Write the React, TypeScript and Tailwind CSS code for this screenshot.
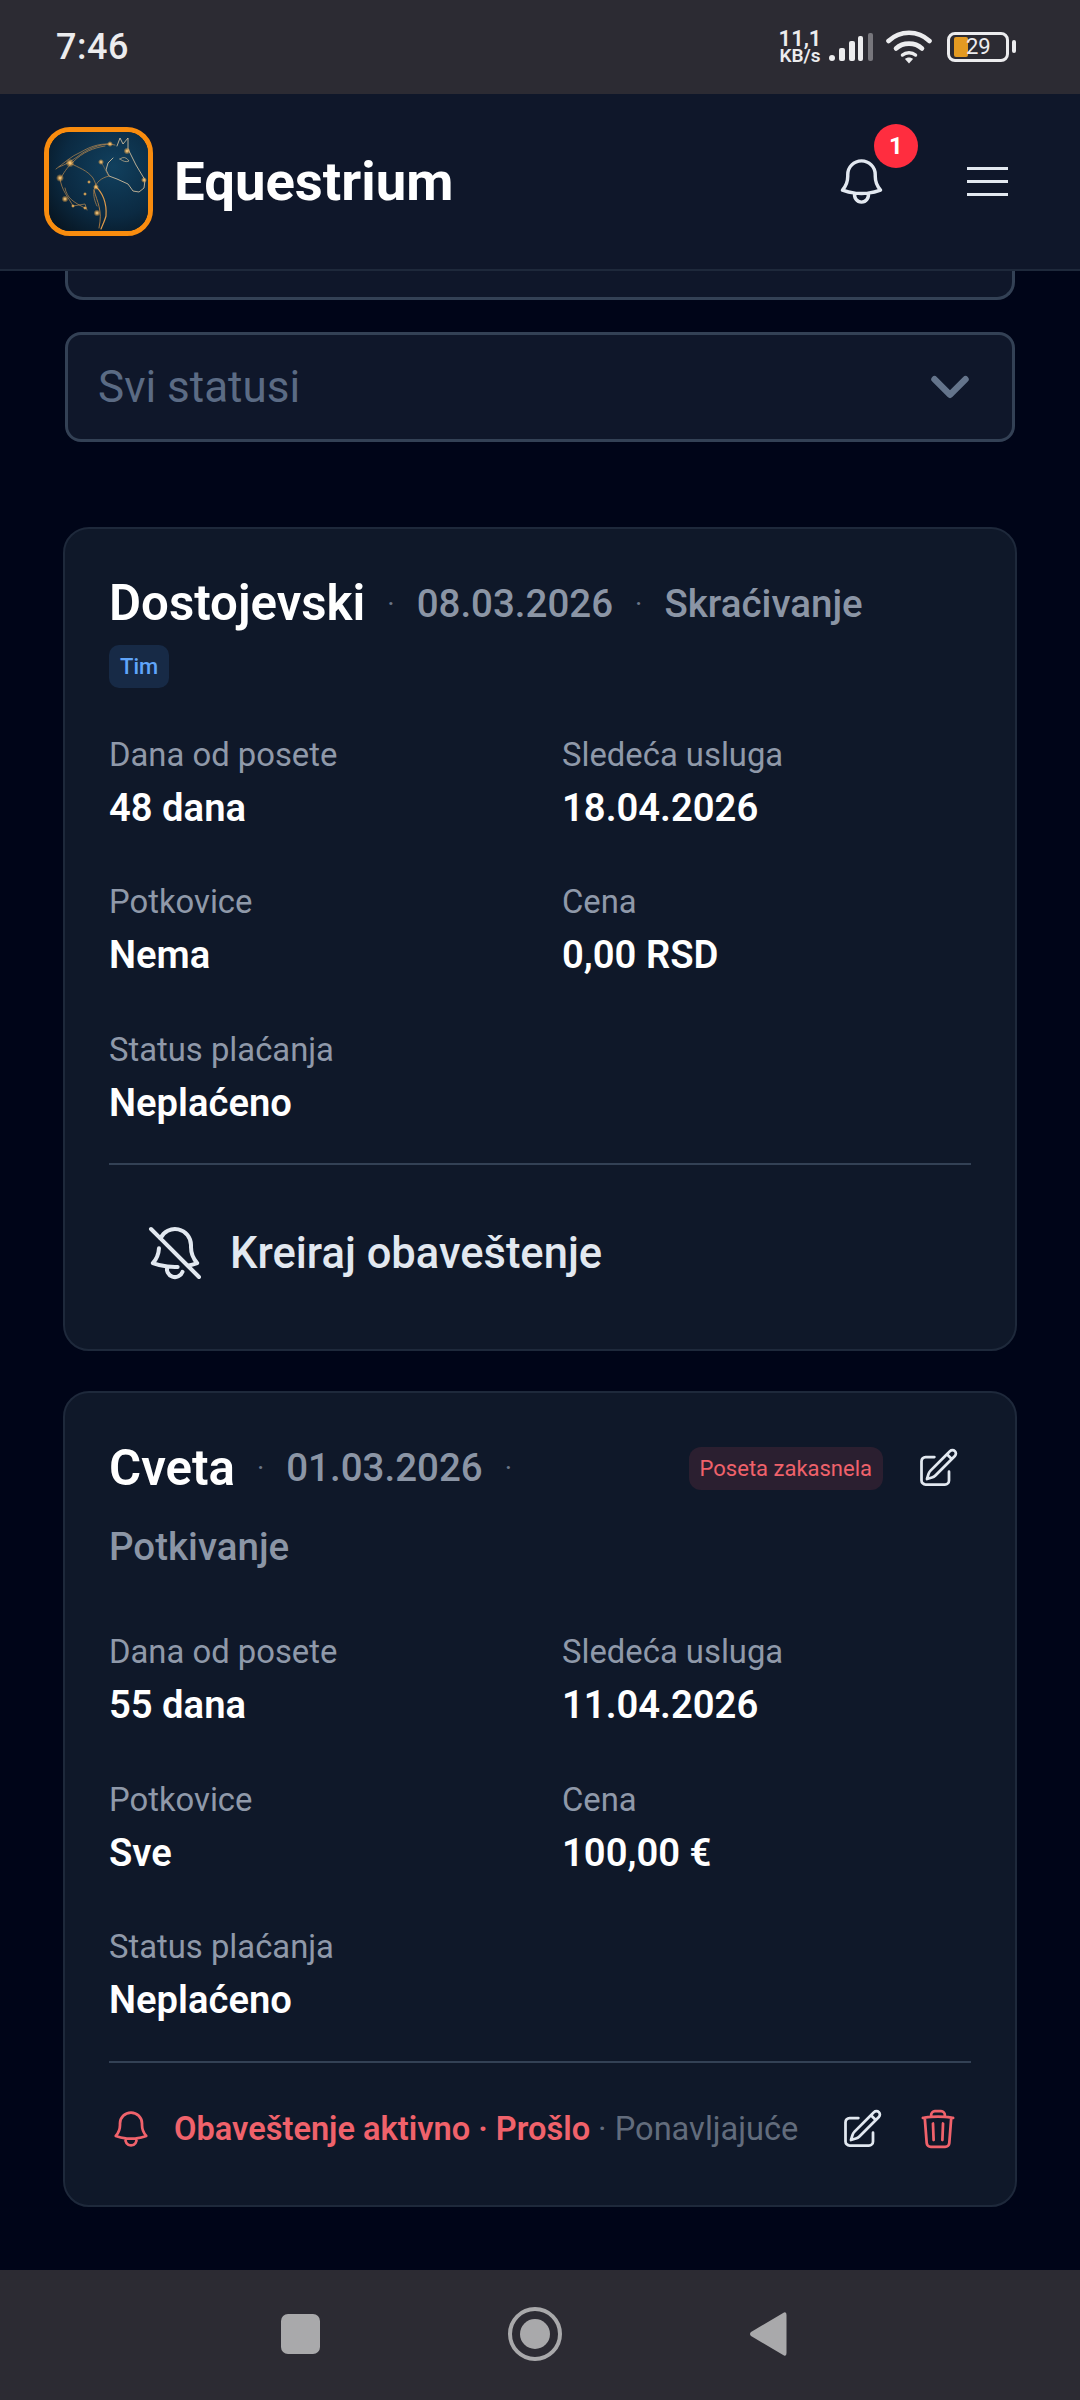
import { HiOutlineBell, HiOutlineBellSlash, HiOutlinePencilSquare, HiOutlineTrash } from "react-icons/hi2";
import { ChevronDown } from "lucide-react";

const sparks: [number, number, number][] = [
  [21, 31, 4.5], [11, 46, 4], [16, 67, 3.5], [48, 81, 3.5], [47, 55, 3], [52, 30, 3],
  [61, 12, 3], [78, 19, 3.5], [95, 48, 3], [24, 74, 2], [36, 62, 2], [40, 50, 2], [36, 76, 2],
];

function Logo() {
  return (
    <div className="h-[109px] w-[109px] shrink-0 overflow-hidden rounded-[26px] border-[5px] border-[#f98c0e] bg-[#0b2238]">
      <svg viewBox="0 0 99 99" className="h-full w-full">
        <defs>
          <radialGradient id="bg" cx="0.65" cy="0.35" r="0.85">
            <stop offset="0" stopColor="#11405e" />
            <stop offset="0.6" stopColor="#0b2a42" />
            <stop offset="1" stopColor="#071420" />
          </radialGradient>
          <radialGradient id="spark">
            <stop offset="0" stopColor="#ffe2a8" />
            <stop offset="0.35" stopColor="#f7b65a" stopOpacity="0.8" />
            <stop offset="1" stopColor="#f7a83c" stopOpacity="0" />
          </radialGradient>
        </defs>
        <rect width="99" height="99" fill="url(#bg)" />
        <g fill="none" strokeLinecap="round" strokeLinejoin="round">
          <path d="M68 14 L71 6 L74 12 L79 6 L79 17 L87 33 L96 48 L95 56 L90 60 L84 59 L79 52 L68 47 L60 44 L57 38 L59 31 L64 26" stroke="#e6cda6" strokeWidth="0.8" />
          <path d="M71 27 Q76 23 80 29 Q76 31 71 27 Z" stroke="#c9b58f" strokeWidth="0.7" />
          <g stroke="#b98a50" strokeWidth="0.7">
            <path d="M66 13 C54 10 42 14 32 20 C22 24 14 32 7 37" />
            <path d="M62 12 C50 12 38 17 28 25 C22 29 16 33 10 35" />
            <path d="M56 14 C44 16 34 20 24 30 C20 34 16 38 12 46" />
            <path d="M60 44 C52 46 47 50 45 58 C44 64 46 70 48 74" />
            <path d="M21 31 C30 36 38 38 44 46 C46 50 47 52 47 55" />
            <path d="M11 46 C12 58 20 66 24 74 M16 56 C18 66 24 70 36 76" />
            <path d="M24 74 L36 72 L38 78" />
          </g>
          <path d="M47 55 C53 60 58 70 57 84 C56 88 54 92 52 97" stroke="#df9a4b" strokeWidth="1.2" />
          <path d="M45 58 C48 70 54 78 50 96" stroke="#c98a44" strokeWidth="0.8" />
          <path d="M52 30 C56 36 57 40 60 44" stroke="#8f7450" strokeWidth="0.6" />
        </g>
        {sparks.map(([x, y, r]) => (
          <circle key={`${x}-${y}`} cx={x} cy={y} r={r} fill="url(#spark)" />
        ))}
      </svg>
    </div>
  );
}

function StatusBar() {
  return (
    <div className="flex h-[94px] items-center justify-between bg-[#2c2b33] pl-[56px] pr-[71px] text-[#ececee]">
      <span className="text-[36px] font-medium leading-none tracking-[0.5px]">7:46</span>
      <div className="flex items-center">
        <div className="mr-[9px] flex w-[40px] flex-col items-center font-semibold leading-none">
          <span className="text-[22px] leading-[18px]">11,1</span>
          <span className="text-[19px] leading-[16px]">KB/s</span>
        </div>
        <svg width="44" height="28" viewBox="0 0 44 28" className="mr-[13px] mt-[1px]">
          <rect x="0" y="22" width="6" height="6" rx="3" fill="#ececee" />
          <rect x="10" y="15" width="6" height="13" rx="2" fill="#ececee" />
          <rect x="20" y="8" width="6" height="20" rx="2" fill="#ececee" />
          <rect x="29" y="3" width="5" height="25" rx="2" fill="#ececee" />
          <rect x="39" y="0" width="5" height="28" rx="2" fill="#77767c" />
        </svg>
        <svg width="46" height="34" viewBox="0 0 46 34" className="mr-[15px]" fill="none" stroke="#ececee" strokeWidth="4.6" strokeLinecap="round">
          <path d="M2.5 11 C14 0 32 0 43.500 11" />
          <path d="M10 18.500 C17 12 29 12 36 18.500" />
          <path d="M16.500 25 C20 22 26 22 29.500 25" strokeWidth="3.500" />
          <path d="M23 33.500 L19 29 C21 27 25 27 27 29 Z" fill="#ececee" stroke="none" />
        </svg>
        <div className="relative flex h-[30px] w-[62px] items-center rounded-[8px] border-[3px] border-[#ececee]">
          <div className="ml-[4px] h-[20px] w-[14px] rounded-[2px] bg-[#e39a22]" />
          <span className="absolute left-[16px] top-0 text-[22px] leading-[24px]">29</span>
          <div className="absolute right-[-10px] top-[5px] h-[13px] w-[4px] rounded-full bg-[#ececee]" />
        </div>
      </div>
    </div>
  );
}

function AppHeader() {
  return (
    <header className="flex h-[177px] items-center justify-between border-b-[2px] border-[#1e293b] bg-[#0f172a] pl-[44px] pr-[72px]">
      <div className="flex items-center gap-[21px]">
        <Logo />
        <span className="text-[54.500px] font-bold leading-none text-white">Equestrium</span>
      </div>
      <div className="flex items-center gap-[78px]">
        <div className="relative">
          <HiOutlineBell className="h-[55px] w-[55px] text-[#e2e8f0]" strokeWidth={1.5} />
          <div className="absolute right-[-29px] top-[-30px] flex h-[44px] w-[44px] items-center justify-center rounded-full bg-[#ff2d3f] text-[24px] font-bold text-white">
            1
          </div>
        </div>
        <div className="flex w-[41px] flex-col gap-[10px]">
          <div className="h-[3px] bg-[#e2e8f0]" />
          <div className="h-[3px] bg-[#e2e8f0]" />
          <div className="h-[3px] bg-[#e2e8f0]" />
        </div>
      </div>
    </header>
  );
}

function Field({ label, value }: { label: string; value: string }) {
  return (
    <div className="h-[147.500px]">
      <div className="text-[32.800px] leading-[48px] text-[#8f99a9]">{label}</div>
      <div className="mt-[5px] text-[38.200px] font-semibold leading-[48px] text-white">{value}</div>
    </div>
  );
}

function Dot() {
  return <span className="mx-[22px] text-[28px] text-[#6b7688]">·</span>;
}

function Card1() {
  return (
    <section className="rounded-[26px] border-[2px] border-[#1e293b] bg-[#0f1829] px-[44px] pt-[45px]">
      <div className="flex h-[60px] items-center">
        <span className="text-[49.200px] font-semibold leading-none text-white">Dostojevski</span>
        <Dot />
        <span className="text-[38.500px] font-medium leading-none text-[#8b95a5]">08.03.2026</span>
        <Dot />
        <span className="text-[38.500px] font-medium leading-none text-[#8b95a5]">Skraćivanje</span>
      </div>
      <div className="mt-[11px] flex">
        <span className="rounded-[10px] bg-[#172a46] px-[11px] text-[22px] font-medium leading-[43px] text-[#60a5fa]">Tim</span>
      </div>
      <div className="-mb-[10px] mt-[43px] grid grid-cols-2 gap-x-[44px]">
        <Field label="Dana od posete" value="48 dana" />
        <Field label="Sledeća usluga" value="18.04.2026" />
        <Field label="Potkovice" value="Nema" />
        <Field label="Cena" value="0,00 RSD" />
        <Field label="Status plaćanja" value="Neplaćeno" />
      </div>
      <div className="flex h-[186px] items-center border-t-[2px] border-[#334155] pb-[8px] pl-[34px]">
        <HiOutlineBellSlash className="mr-[23px] h-[64px] w-[64px] text-[#e2e8f0]" />
        <span className="text-[43.500px] font-medium leading-none text-[#e2e8f0]">Kreiraj obaveštenje</span>
      </div>
    </section>
  );
}

function Card2() {
  return (
    <section className="rounded-[26px] border-[2px] border-[#1e293b] bg-[#0f1829] px-[44px] pt-[45px]">
      <div className="flex h-[60px] items-center">
        <span className="text-[49.200px] font-semibold leading-none text-white">Cveta</span>
        <Dot />
        <span className="text-[38.500px] font-medium leading-none text-[#8b95a5]">01.03.2026</span>
        <Dot />
        <span className="ml-auto rounded-[12px] bg-[#2b1f30] px-[11px] text-[22px] font-normal leading-[43px] text-[#f0626b]">Poseta zakasnela</span>
        <HiOutlinePencilSquare className="ml-[33px] mr-[11px] h-[44px] w-[44px] text-[#e2e8f0]" />
      </div>
      <div className="mt-[25px] text-[38.500px] font-medium leading-[48px] text-[#8b95a5]">Potkivanje</div>
      <div className="-mb-[10px] mt-[57px] grid grid-cols-2 gap-x-[44px]">
        <Field label="Dana od posete" value="55 dana" />
        <Field label="Sledeća usluga" value="11.04.2026" />
        <Field label="Potkovice" value="Sve" />
        <Field label="Cena" value="100,00 €" />
        <Field label="Status plaćanja" value="Neplaćeno" />
      </div>
      <div className="flex h-[144px] items-center border-t-[2px] border-[#334155] pb-[10px]">
        <HiOutlineBell className="mr-[21px] h-[44px] w-[44px] text-[#f0626b]" />
        <span className="text-[32.600px] font-semibold leading-none text-[#f0626b]">Obaveštenje aktivno · Prošlo</span>
        <span className="ml-[8px] text-[32.600px] leading-none text-[#626c7c]">· Ponavljajuće</span>
        <HiOutlinePencilSquare className="ml-auto h-[44px] w-[44px] text-[#e2e8f0]" />
        <HiOutlineTrash className="ml-[32px] mr-[11px] h-[44px] w-[44px] text-[#f0626b]" />
      </div>
    </section>
  );
}

function NavBar() {
  return (
    <div className="flex h-[130px] items-center bg-[#2c2b33] pb-[2px] pl-[281px]">
      <div className="h-[40px] w-[39px] rounded-[7px] bg-[#a9a9ab]" />
      <div className="ml-[188px] flex h-[54px] w-[54px] items-center justify-center rounded-full border-[4px] border-[#a9a9ab]">
        <div className="h-[30px] w-[30px] rounded-full bg-[#a9a9ab]" />
      </div>
      <svg width="38" height="46" viewBox="0 0 38 46" className="ml-[187px]">
        <path d="M35 1.500 Q37.500 0.500 37.500 4 V42 Q37.500 45.500 35 44.500 L2 25 Q0 23 2 21 Z" fill="#a9a9ab" />
      </svg>
    </div>
  );
}

export default function App() {
  return (
    <div className="flex h-[2400px] w-[1080px] flex-col overflow-hidden bg-[#000518] font-['Roboto',sans-serif]">
      <StatusBar />
      <AppHeader />
      <main className="h-[2000px] px-[63px]">
        <div className="mx-[2px] h-[29px] rounded-b-[18px] border-x-[3px] border-b-[3px] border-[#334155] bg-[#0f172a]" />
        <div className="mx-[2px] mt-[32px] flex h-[110px] items-center justify-between rounded-[16px] border-[3px] border-[#334155] bg-[#0f172a] pl-[30px] pr-[31px]">
          <span className="text-[44px] leading-none text-[#5b6b84]">Svi statusi</span>
          <ChevronDown className="h-[62px] w-[62px] text-[#64748b]" strokeWidth={2.5} />
        </div>
        <div className="mt-[85px] flex flex-col gap-[40px]">
          <Card1 />
          <Card2 />
        </div>
      </main>
      <NavBar />
    </div>
  );
}
